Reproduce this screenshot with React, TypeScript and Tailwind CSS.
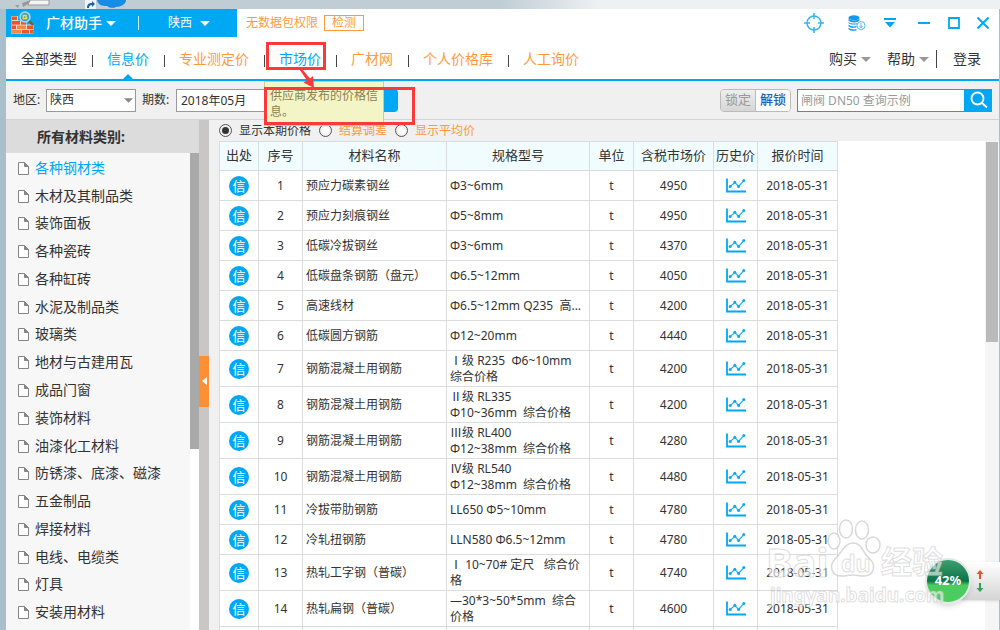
import React from "react";

const categories = [
  "各种钢材类", "木材及其制品类", "装饰面板", "各种瓷砖", "各种缸砖", "水泥及制品类",
  "玻璃类", "地材与古建用瓦", "成品门窗", "装饰材料", "油漆化工材料", "防锈漆、底漆、磁漆",
  "五金制品", "焊接材料", "电线、电缆类", "灯具", "安装用材料",
];

type Row = { name: string; grade?: string; spec: string; price: string; tall?: boolean };

const rows: Row[] = [
  { name: "预应力碳素钢丝", spec: "Φ3~6mm", price: "4950" },
  { name: "预应力刻痕钢丝", spec: "Φ5~8mm", price: "4950" },
  { name: "低碳冷拔钢丝", spec: "Φ3~6mm", price: "4370" },
  { name: "低碳盘条钢筋（盘元）", spec: "Φ6.5~12mm", price: "4050" },
  { name: "高速线材", spec: "Φ6.5~12mm Q235  高...", price: "4200" },
  { name: "低碳圆方钢筋", spec: "Φ12~20mm", price: "4440" },
  { name: "钢筋混凝土用钢筋", grade: "Ⅰ", spec: "级 R235  Φ6~10mm\n综合价格", price: "4200", tall: true },
  { name: "钢筋混凝土用钢筋", grade: "Ⅱ", spec: "级 RL335\nΦ10~36mm  综合价格", price: "4200", tall: true },
  { name: "钢筋混凝土用钢筋", grade: "Ⅲ", spec: "级 RL400\nΦ12~38mm  综合价格", price: "4280", tall: true },
  { name: "钢筋混凝土用钢筋", grade: "Ⅳ", spec: "级 RL540\nΦ12~38mm  综合价格", price: "4480", tall: true },
  { name: "冷拔带肋钢筋", spec: "LL650 Φ5~10mm", price: "4780" },
  { name: "冷轧扭钢筋", spec: "LLN580 Φ6.5~12mm", price: "4780" },
  { name: "热轧工字钢（普碳）", grade: "Ⅰ", spec: " 10~70# 定尺   综合价\n格", price: "4740", tall: true },
  { name: "热轧扁钢（普碳）", spec: "—30*3~50*5mm  综合\n价格", price: "4600", tall: true },
];

function Caret({ className }: { className: string }) {
  return (
    <svg viewBox="0 0 10 5" className={className} aria-hidden="true">
      <path d="M0 0h10L5 5z" fill="currentColor" />
    </svg>
  );
}

function Logo() {
  return (
    <svg viewBox="0 0 24 24" className="h-6 w-6" aria-hidden="true">
      <rect x="0.5" y="5" width="22" height="18" fill="#f3d9c4" />
      <g fill="#e8572b">
        <rect x="1" y="5.500" width="5" height="3.500" />
        <rect x="1" y="10" width="8" height="3.600" />
        <rect x="10" y="10" width="5" height="3.600" />
        <rect x="1" y="14.500" width="4" height="3.600" />
        <rect x="6" y="14.500" width="9" height="3.600" fill="#f28a45" />
        <rect x="16" y="14.500" width="6" height="3.600" />
        <rect x="1" y="19" width="9" height="3.600" fill="#f28a45" />
        <rect x="11" y="19" width="7" height="3.600" />
        <rect x="19" y="19" width="3.500" height="3.600" />
      </g>
      <path d="M7 0h17v13.500H15.500V9.500H7z" fill="#00a8f3" />
      <path d="M17.500 9.500l4.500 4.500" stroke="#8a5a20" strokeWidth="2.400" />
      <circle cx="14" cy="6" r="5" fill="#3f9fd0" stroke="#a6dcf5" strokeWidth="1.500" />
      <path d="M15.800 4.500h-3.600v3.200h3.400V6.200h-1.800" fill="none" stroke="#f4dc3c" strokeWidth="1.300" />
    </svg>
  );
}

function FileIcon() {
  return (
    <svg viewBox="0 0 11 13" className="mt-px h-[13px] w-[11px] shrink-0" aria-hidden="true">
      <path d="M0.500 0.500h6L10.500 4.500v8H0.500z" fill="#fff" stroke="#858585" />
      <path d="M6.500 0.500v4h4" fill="#858585" stroke="#858585" />
    </svg>
  );
}

function ChartIcon() {
  return (
    <svg viewBox="0 0 20 15" className="mx-auto h-[15px] w-5" aria-hidden="true">
      <path d="M1 0.500V13.500H20" fill="none" stroke="#00a8f3" strokeWidth="1.800" />
      <path d="M4 8.500L9 4.500L12.500 8.500L17.500 3" fill="none" stroke="#2bb3f3" strokeWidth="1.200" />
      <g fill="#12a8f0">
        <circle cx="4.200" cy="8.500" r="1.500" />
        <circle cx="8.800" cy="4.300" r="1.500" />
        <circle cx="12.600" cy="8.500" r="1.500" />
        <circle cx="17.800" cy="2.600" r="1.500" />
      </g>
    </svg>
  );
}

function TitleBar() {
  return (
    <header className="flex h-7 items-center">
      <div className="flex h-full w-[231px] items-center bg-[#00a8f3] pl-[5px] text-white">
        <Logo />
        <button className="ml-[11px] flex items-center gap-1 text-sm font-medium">
          广材助手
          <Caret className="h-[5px] w-[10px]" />
        </button>
        <span className="ml-[22px] h-[14px] w-px bg-white/80" />
        <button className="ml-[29px] flex items-center gap-2 text-xs">
          陕西
          <Caret className="h-[5px] w-[10px]" />
        </button>
      </div>
      <span className="ml-[9px] text-xs text-[#ff9a3c]">无数据包权限</span>
      <button className="ml-[6px] flex h-4 w-10 items-center justify-center border border-[#ff9a3c] text-xs leading-none text-[#ff9a3c]">
        检测
      </button>
      <div className="ml-auto flex items-center pr-[10px] text-[#00a8f3]">
        <button aria-label="定位" className="mr-6">
          <svg viewBox="0 0 20 20" className="h-5 w-5" fill="none" stroke="#35b4ee" strokeWidth="1.500">
            <circle cx="10" cy="10" r="7" />
            <path d="M10 0v6M10 14v6M0 10h6M14 10h6" />
          </svg>
        </button>
        <button aria-label="数据下载" className="mr-[18px]">
          <svg viewBox="0 0 18 16" className="h-4 w-[18px]" fill="#1298ee">
            <ellipse cx="6" cy="2.800" rx="5.500" ry="2.500" />
            <path d="M0.500 3.500c2 2.500 9 2.500 11 0v2c-2 2.500-9 2.500-11 0z" />
            <path d="M0.500 6.900c2 2.200 9 2.200 11 0v1c-2 2.200-9 2.200-11 0z" />
            <path d="M0.500 9.500c2 2.200 6 2.200 8 1.500v1.200c-2 .8-6 .8-8-1z" />
            <path d="M0.500 12.500c2 2.200 6 2.200 8 1.500v1.200c-2 .8-6 .8-8-1z" />
            <circle cx="13" cy="10.500" r="4" fill="#fff" stroke="#4db8f2" />
            <path d="M13 8v4.500M11.500 11l1.500 1.700 1.500-1.700" fill="none" stroke="#4db8f2" />
          </svg>
        </button>
        <button aria-label="菜单" className="mr-[22px]">
          <svg viewBox="0 0 12 10" className="h-[10px] w-3" fill="currentColor">
            <path d="M0 0h12v2H0zM1 4h10L6 9.500z" />
          </svg>
        </button>
        <button aria-label="最小化" className="mr-[18px]">
          <svg viewBox="0 0 12 12" className="h-3 w-3"><path d="M0 6h12" stroke="currentColor" strokeWidth="2" /></svg>
        </button>
        <button aria-label="最大化" className="mr-[17px]">
          <svg viewBox="0 0 12 12" className="h-3 w-3"><path d="M1 1h10v10H1z" fill="none" stroke="currentColor" strokeWidth="1.800" /></svg>
        </button>
        <button aria-label="关闭">
          <svg viewBox="0 0 12 12" className="h-3 w-3"><path d="M0.500 0.500l11 11M11.500 0.500l-11 11" stroke="currentColor" strokeWidth="2" /></svg>
        </button>
      </div>
    </header>
  );
}

function Separator() {
  return (
    <span className="flex w-[30px] justify-center">
      <span className="mt-1 h-3 w-px bg-[#444]" />
    </span>
  );
}

function MarketTab() {
  return (
    <div className="relative">
      <a href="#market" className="text-[#00a8f3]">市场价</a>
      <span className="absolute -top-[7px] -left-[13px] z-30 h-7 w-[60px] border-[3px] border-[#f93a3a]" />
      <div
        role="tooltip"
        className="absolute top-8 -left-[15px] z-20 h-[45px] w-[120px] border border-[#c9cf86] bg-[#f4f5c6] pt-[6px] pl-[5px] text-xs leading-4 text-[#8c8150]"
      >
        供应商发布的价格信息。
      </div>
      <span className="absolute top-[38px] -left-[15px] z-30 h-[38px] w-[151px] border-[3px] border-[#f93a3a]" />
      <svg viewBox="0 0 20 20" className="absolute top-5 left-5 z-30 h-5 w-5" aria-hidden="true">
        <path d="M0.500 0.500L3 0l8 9.500 3-2.500 1 12-10.500-5.500L8 11.500z" fill="#f93a3a" />
      </svg>
    </div>
  );
}

function NavBar() {
  return (
    <nav className="flex h-11 items-center border-b-2 border-[#00a8f3] pt-[2px] pr-[18px] pl-[15px] text-sm leading-5 text-[#ff9a3c]">
      <a href="#all" className="text-[#333]">全部类型</a>
      <Separator />
      <div className="relative">
        <a href="#info" className="text-[#00a8f3]">信息价</a>
        <span className="absolute top-[25px] left-[15px] border-x-[6px] border-b-[6px] border-x-transparent border-b-[#00a8f3]" />
      </div>
      <Separator />
      <a href="#pro">专业测定价</a>
      <Separator />
      <MarketTab />
      <Separator />
      <a href="#net">广材网</a>
      <Separator />
      <a href="#personal">个人价格库</a>
      <Separator />
      <a href="#inquiry">人工询价</a>
      <div className="ml-auto flex items-center text-[#333]">
        <button className="flex items-center gap-1">
          购买 <Caret className="h-[5px] w-[10px] text-[#999]" />
        </button>
        <button className="ml-4 flex items-center gap-1">
          帮助 <Caret className="h-[5px] w-[10px] text-[#999]" />
        </button>
        <span className="mr-4 ml-[7px] h-[18px] w-px bg-[#444]" />
        <a href="#login">登录</a>
      </div>
    </nav>
  );
}

function Toolbar() {
  return (
    <div className="flex h-[39px] items-center border-b border-[#d4d4d4] bg-[#f0f0f0] pr-[7px] pl-[7px] text-xs text-[#333]">
      <label htmlFor="region" className="w-[33px]">地区:</label>
      <div className="relative">
        <select id="region" className="h-[23px] w-[90px] appearance-none border border-[#999] bg-white pl-[3px] text-xs">
          <option>陕西</option>
        </select>
        <Caret className="pointer-events-none absolute top-[9px] right-[3px] h-[5px] w-[9px] text-[#888]" />
      </div>
      <label htmlFor="period" className="ml-[6px] w-[34px]">期数:</label>
      <input id="period" defaultValue="2018年05月" className="h-[23px] w-[190px] border border-[#999] bg-white pl-1 text-xs" />
      <button aria-label="查询" className="h-[23px] w-8 rounded-sm bg-[#00a8f3]" />
      <div className="ml-auto flex h-[23px] overflow-hidden rounded-sm border border-[#bbb] text-[13px]">
        <button className="w-[35px] border-r border-[#bbb] bg-gradient-to-b from-[#eee] to-[#d6d6d6] text-[#999]">锁定</button>
        <button className="w-[34px] bg-[#fafafa] font-medium text-[#1d63b5]">解锁</button>
      </div>
      <div className="ml-[6px] flex h-[23px]">
        <input
          aria-label="搜索材料"
          placeholder="闸阀 DN50 查询示例"
          className="h-full w-[168px] border border-[#00a8f3] bg-white pl-[3px] text-xs placeholder:text-[#999]"
        />
        <button aria-label="搜索" className="flex w-[27px] items-center justify-center bg-[#00a8f3]">
          <svg viewBox="0 0 18 18" className="h-[18px] w-[18px]" fill="none" stroke="#fff" strokeWidth="1.800">
            <circle cx="7.500" cy="7.500" r="6" />
            <path d="M12 12l5 4.500" />
          </svg>
        </button>
      </div>
    </div>
  );
}

function Sidebar() {
  return (
    <aside className="flex w-[193px] shrink-0 flex-col">
      <h2 className="flex h-[33px] shrink-0 items-center bg-[#dcdcdc] pl-[31px] text-sm font-bold text-[#333]">所有材料类别:</h2>
      <div className="flex min-h-0 flex-1">
        <ul className="flex flex-1 flex-col bg-[#f7f7f7] pt-px pb-1 text-sm text-[#333]">
          {categories.map((name, i) => (
            <li key={name} className="flex min-h-0 flex-1 items-center">
              <a href={`#category-${i}`} className={i === 0 ? "flex items-center gap-[6px] pl-3 text-[#00a8f3]" : "flex items-center gap-[6px] pl-3"}>
                <FileIcon />
                {name}
              </a>
            </li>
          ))}
        </ul>
        <div className="w-[9px] bg-white">
          <div className="h-[62%] bg-[#a9a9a9]" />
        </div>
      </div>
    </aside>
  );
}

function PriceTable() {
  return (
    <table className="w-[618px] shrink-0 table-fixed border-collapse self-start bg-white text-xs text-[#333]">
      <colgroup>
        <col className="w-[39px]" />
        <col className="w-11" />
        <col className="w-36" />
        <col className="w-[143px]" />
        <col className="w-11" />
        <col className="w-20" />
        <col className="w-11" />
        <col className="w-20" />
      </colgroup>
      <thead>
        <tr className="h-[29px] bg-[#f0fcff] text-[13px]">
          {["出处", "序号", "材料名称", "规格型号", "单位", "含税市场价", "历史价", "报价时间"].map((h) => (
            <th key={h} className="border border-[#d9dcdc] p-0 font-normal whitespace-nowrap">{h}</th>
          ))}
        </tr>
      </thead>
      <tbody>
        {rows.map((r, i) => (
          <tr key={i} className={r.tall ? "h-9 text-center" : "h-[30px] text-center"}>
            <td className="border border-[#dcdcdc] p-0">
              <span className="mx-auto flex h-5 w-5 items-center justify-center rounded-full bg-[#00a8f3] text-[13px] leading-5 text-white">信</span>
            </td>
            <td className="border border-[#dcdcdc] p-0">{i + 1}</td>
            <td className="border border-[#dcdcdc] p-0 pl-[3px] text-left whitespace-nowrap">{r.name}</td>
            <td className="overflow-hidden border border-[#dcdcdc] p-0 pl-[3px] text-left leading-4 whitespace-pre">
              {r.grade && <span className="font-['Noto_Sans_CJK_SC',sans-serif]">{r.grade}</span>}
              {r.spec}
            </td>
            <td className="border border-[#dcdcdc] p-0">t</td>
            <td className="border border-[#dcdcdc] p-0">{r.price}</td>
            <td className="border border-[#dcdcdc] p-0"><ChartIcon /></td>
            <td className="border border-[#dcdcdc] p-0">2018-05-31</td>
          </tr>
        ))}
        <tr className="h-[30px]">
          {[0, 1, 2, 3, 4, 5, 6, 7].map((c) => <td key={c} className="border border-[#dcdcdc]" />)}
        </tr>
      </tbody>
    </table>
  );
}

function PriceRadio({ label, checked, className }: { label: string; checked?: boolean; className: string }) {
  return (
    <label className={className}>
      <input
        type="radio"
        name="price-mode"
        defaultChecked={checked}
        className="h-[13px] w-[13px] appearance-none rounded-full border border-[#555] bg-white bg-clip-content p-[2px] checked:bg-[#333]"
      />
      {label}
    </label>
  );
}

function Content() {
  return (
    <main className="flex min-w-0 flex-1 flex-col bg-[#f0f0f0] pl-[10px]">
      <div className="flex h-[21px] shrink-0 items-center text-xs">
        <PriceRadio label="显示本期价格" checked className="flex w-[100px] items-center gap-[7px] text-[#333]" />
        <PriceRadio label="结算调差" className="flex w-[76px] items-center gap-[7px] text-[#ff9a3c]" />
        <PriceRadio label="显示平均价" className="flex items-center gap-[7px] text-[#ff9a3c]" />
      </div>
      <div className="flex min-h-0 flex-1 overflow-hidden bg-white">
        <PriceTable />
        <div className="ml-auto w-[14px] bg-[#f5f5f5] px-px pt-px">
          <div className="h-[41%] bg-[#bababa]" />
        </div>
      </div>
    </main>
  );
}

function Watermark() {
  return (
    <div className="pointer-events-none absolute right-[54px] bottom-[18px] z-40 h-[92px] w-[180px] font-bold whitespace-nowrap text-white/60 [-webkit-text-stroke:1px_rgba(190,190,190,0.5)]">
      <svg viewBox="0 0 56 60" className="absolute -top-px left-[60px] h-[60px] w-14" fill="rgba(255,255,255,0.6)" stroke="rgba(190,190,190,0.6)" strokeWidth="1.500" aria-hidden="true">
        <ellipse cx="8" cy="22" rx="6" ry="8" />
        <ellipse cx="20" cy="10" rx="6.500" ry="9" />
        <ellipse cx="36" cy="11" rx="6.500" ry="9" />
        <ellipse cx="47" cy="26" rx="7" ry="8" />
        <path d="M27 24c9 0 9 9 16 15 8 7 5 18-5 18-5 0-7-1-11-1s-7 1-12 1C5 57 3 46 9 40c7-6 9-16 18-16z" />
      </svg>
      <span className="absolute top-[22px] left-0 text-[40px] leading-none">Bai</span>
      <span className="absolute top-[32px] left-[75px] text-[23px] leading-none">du</span>
      <span className="absolute top-[26px] left-[115px] text-[31px] leading-none">经验</span>
      <span className="absolute top-[66px] left-1 text-[19px] leading-none">jingyan.baidu.com</span>
    </div>
  );
}

function NetworkBall() {
  return (
    <div className="absolute right-0 bottom-[26px] z-30 flex h-[46px] w-[75px] items-center">
      <div className="absolute right-0 flex h-[38px] w-10 flex-col items-center justify-center gap-1 bg-gradient-to-b from-white to-[#d5d5d5] shadow">
        <svg viewBox="0 0 8 9" className="h-[9px] w-2"><path d="M4 0l3.500 4H5v5H3V4H.5z" fill="#e8522f" /></svg>
        <svg viewBox="0 0 8 9" className="h-[9px] w-2"><path d="M4 9L.5 5H3V0h2v5h2.500z" fill="#2ea35a" /></svg>
      </div>
      <div className="relative flex h-[46px] w-[46px] items-center justify-center rounded-full border-2 border-[#e4e8e4] bg-gradient-to-b from-[#3b9f70] via-[#07744a] via-50% to-[#4ccb5e] to-60% text-[13px] font-bold text-white shadow-md">
        42%
      </div>
    </div>
  );
}

export default function App() {
  return (
    <div className="relative flex h-screen flex-col overflow-hidden bg-[#a9bfcb] pr-px pl-[6px] font-['Noto_Sans','Noto_Sans_CJK_SC',sans-serif]">
      <div className="-mr-px -ml-[6px] flex h-[9px] shrink-0 items-start bg-gradient-to-r from-[#c0cdd5] from-50% to-[#eef1f3] to-60%">
        <svg viewBox="0 0 130 9" className="h-[9px] w-[130px]" aria-hidden="true">
          <path d="M30 0h19v5H28z" fill="#f3f3f3" stroke="#999" />
          <path d="M15 5h4l-1 3zM22 3l9-3-3 4-5 3z" fill="#999" />
          <path d="M85 0h11v9H85z" fill="#f1f4f6" />
          <path d="M87 8c0-4 2-5 5-5V1l3 3-3 3V5c-2 0-3 1-3 3z" fill="#1f5fa8" />
          <path d="M97 0h29c0 4-5 7-10 7-4 2-8 0-9-1-5 0-9-1-10-6z" fill="#168be8" />
        </svg>
      </div>
      <div className="flex min-h-0 flex-1 flex-col bg-white">
        <TitleBar />
        <NavBar />
        <Toolbar />
        <div className="flex min-h-0 flex-1">
          <Sidebar />
          <div className="flex w-[10px] shrink-0 flex-col items-center justify-center bg-[#c8c7c6] pt-3">
            <button aria-label="收起类别" className="flex h-[51px] w-full items-center justify-center bg-[#ff8f33] text-white">
              <svg viewBox="0 0 5 8" className="h-2 w-[5px]"><path d="M5 0v8L0 4z" fill="currentColor" /></svg>
            </button>
          </div>
          <Content />
        </div>
      </div>
      <Watermark />
      <NetworkBall />
    </div>
  );
}
